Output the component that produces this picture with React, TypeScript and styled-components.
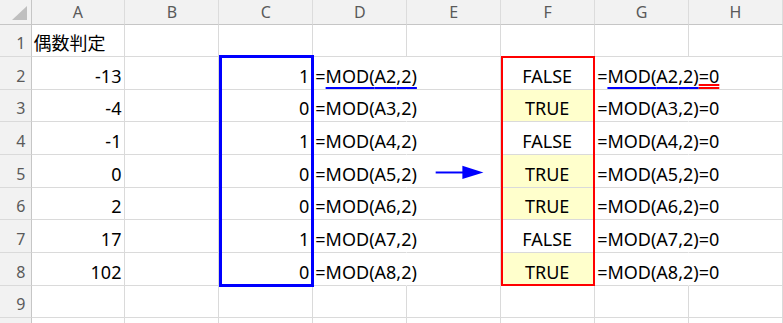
import React from "react";
import styled, { createGlobalStyle } from "styled-components";

type Align = "left" | "right" | "center";

const GlobalStyle = createGlobalStyle`
  html, body {
    margin: 0;
    padding: 0;
    background: #fff;
    overflow: hidden;
  }
  body {
    font-family: "Noto Sans", "Noto Sans CJK JP", sans-serif;
  }
`;

const Sheet = styled.div`
  display: grid;
  width: 783px;
  grid-template-columns: 31.5px repeat(8, 1fr);
  grid-template-rows: 24.5px repeat(10, 32.67px);
  font-family: "Noto Sans", "Noto Sans CJK JP", sans-serif;
  background: #fff;
`;

interface PlaceProps {
  $row: number;
  $col: number;
}

const Corner = styled.div<PlaceProps>`
  grid-row: ${p => p.$row};
  grid-column: ${p => p.$col};
  box-sizing: border-box;
  background: #f2f2f2;
  border-right: 1px solid #c6c6c6;
  border-bottom: 1px solid #c6c6c6;
  display: flex;
  align-items: flex-end;
  justify-content: flex-end;
  padding: 0 3.5px 3.5px 0;
`;

const CornerMark = styled.span`
  width: 15px;
  height: 14px;
  background: #bfbfbf;
  clip-path: polygon(100% 0, 100% 100%, 0 100%);
`;

const ColHead = styled.div<PlaceProps>`
  grid-row: ${p => p.$row};
  grid-column: ${p => p.$col};
  box-sizing: border-box;
  background: #f2f2f2;
  border-right: 1px solid #dcdcdc;
  border-bottom: 1px solid #c6c6c6;
  display: flex;
  align-items: center;
  justify-content: center;
  font-size: 16px;
  line-height: 20px;
  color: #5a5a5a;
`;

const RowHead = styled.div<PlaceProps>`
  grid-row: ${p => p.$row};
  grid-column: ${p => p.$col};
  box-sizing: border-box;
  background: #f2f2f2;
  border-right: 1px solid #c6c6c6;
  border-bottom: 1px solid #dadada;
  display: flex;
  align-items: flex-end;
  justify-content: flex-end;
  padding: 0 5px 3px 0;
  font-size: 16px;
  line-height: 20px;
  color: #5a5a5a;
`;

interface CellProps extends PlaceProps {
  $align?: Align;
  $fill?: string;
  $spill?: boolean;
}

const justify = { left: "flex-start", right: "flex-end", center: "center" };

const Cell = styled.div<CellProps>`
  grid-row: ${p => p.$row};
  grid-column: ${p => p.$col};
  box-sizing: border-box;
  min-width: 0;
  border-right: 1px solid ${p => (p.$spill ? "transparent" : "#dadada")};
  border-bottom: 1px solid #dadada;
  background: ${p => p.$fill ?? "transparent"};
  display: flex;
  align-items: flex-end;
  justify-content: ${p => justify[p.$align ?? "left"]};
  padding: 0 3px 1px 2px;
  font-size: 18px;
  line-height: 24px;
  color: #000;
  white-space: nowrap;
`;

const ArrowCell = styled(Cell)`
  padding: 0;
  align-items: flex-start;
`;

const Marked = styled.span<{ $color: string; $double?: boolean }>`
  text-decoration-line: underline;
  text-decoration-style: ${p => (p.$double ? "double" : "solid")};
  text-decoration-color: ${p => p.$color};
  text-decoration-thickness: ${p => (p.$double ? "1.5px" : "2px")};
  text-underline-offset: ${p => (p.$double ? "1px" : "4px")};
  text-decoration-skip-ink: none;
`;

// highlight rectangle drawn over a column range
const Frame = styled.div<{ $col: number; $from: number; $to: number; $color: string; $width: number; $margin: string }>`
  grid-column: ${p => p.$col};
  grid-row: ${p => p.$from} / ${p => p.$to + 1};
  box-sizing: border-box;
  margin: ${p => p.$margin};
  border: ${p => p.$width}px solid ${p => p.$color};
  position: relative;
  z-index: 2;
  pointer-events: none;
`;

const letters = ["A", "B", "C", "D", "E", "F", "G", "H"];
const values = [-13, -4, -1, 0, 2, 17, 102];
const mod2 = (v: number) => ((v % 2) + 2) % 2;

function Arrow() {
  return (
    <svg width="94" height="32" viewBox="0 0 94 32">
      <line x1="29" y1="17.5" x2="58" y2="17.5" stroke="#0000ff" strokeWidth="2" />
      <polygon points="56,10.8 77.3,17.5 56,24.2" fill="#0000ff" />
    </svg>
  );
}

function renderCell(sheetRow: number, colIdx: number) {
  const row = sheetRow + 1;
  const col = colIdx + 2;
  const key = `${letters[colIdx]}${sheetRow}`;
  const i = sheetRow - 2;
  const v = values[i];
  const hasData = i >= 0 && i < values.length;

  if (sheetRow === 1 && colIdx === 0)
    return <Cell key={key} $row={row} $col={col}>偶数判定</Cell>;

  if (sheetRow === 5 && colIdx === 4)
    return <ArrowCell key={key} $row={row} $col={col}><Arrow /></ArrowCell>;

  if (hasData) {
    const ref = `A${sheetRow}`;
    switch (colIdx) {
      case 0:
        return <Cell key={key} $row={row} $col={col} $align="right">{v}</Cell>;
      case 2:
        return <Cell key={key} $row={row} $col={col} $align="right">{mod2(v)}</Cell>;
      case 3:
        return (
          <Cell key={key} $row={row} $col={col} $spill>
            {sheetRow === 2 ? <span>=<Marked $color="#0000ff">MOD({ref},2)</Marked></span> : `=MOD(${ref},2)`}
          </Cell>
        );
      case 5: {
        const even = mod2(v) === 0;
        return (
          <Cell key={key} $row={row} $col={col} $align="center" $fill={even ? "#ffffcc" : undefined}>
            {even ? "TRUE" : "FALSE"}
          </Cell>
        );
      }
      case 6:
        return (
          <Cell key={key} $row={row} $col={col} $spill>
            {sheetRow === 2 ? (
              <span>
                =<Marked $color="#0000ff">MOD({ref},2)</Marked>
                <Marked $color="#ff0000" $double>=0</Marked>
              </span>
            ) : `=MOD(${ref},2)=0`}
          </Cell>
        );
    }
  }
  return <Cell key={key} $row={row} $col={col} />;
}

export default function App(): JSX.Element {
  // the tenth row only peeks in at the bottom edge, so its label stays empty
  const rows = Array.from({ length: 10 }, (_, i) => i + 1);
  return (
    <>
      <GlobalStyle />
      <Sheet>
        <Corner $row={1} $col={1}><CornerMark /></Corner>
        {letters.map((l, i) => (
          <ColHead key={`head-${l}`} $row={1} $col={i + 2}>{l}</ColHead>
        ))}
        {rows.map(r => (
          <React.Fragment key={`row-${r}`}>
            <RowHead $row={r + 1} $col={1}>{r < 10 ? r : null}</RowHead>
            {letters.map((_, c) => renderCell(r, c))}
          </React.Fragment>
        ))}
        <Frame $col={4} $from={3} $to={9} $color="#0000ff" $width={3} $margin="-2px -1px -1.5px 0" />
        <Frame $col={7} $from={3} $to={9} $color="#ff0000" $width={2} $margin="-1px 0 0 0" />
      </Sheet>
    </>
  );
}
